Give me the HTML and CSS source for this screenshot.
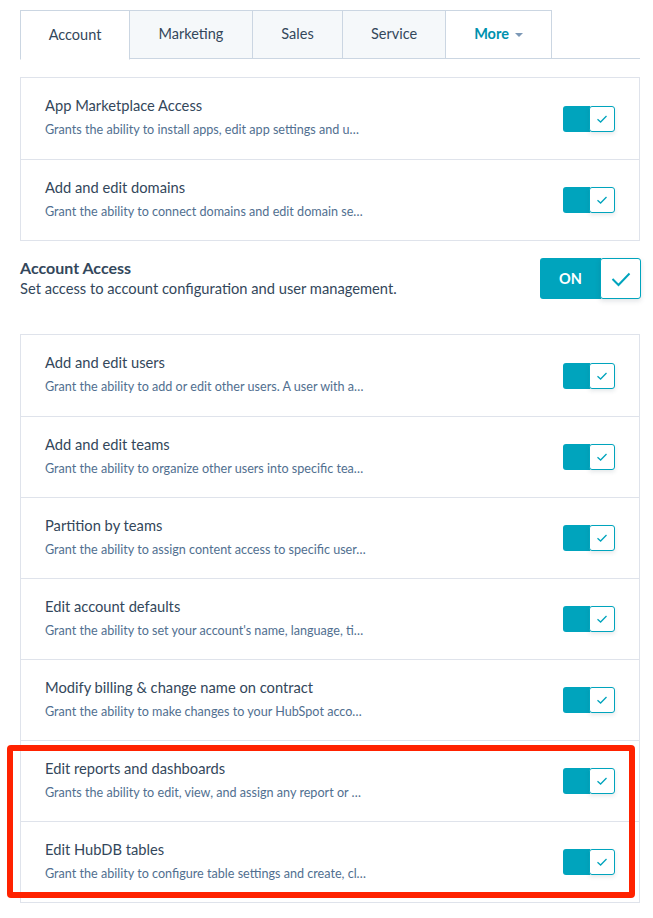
FILE: index.html
```html
<!DOCTYPE html>
<html>
<head>
<meta charset="utf-8">
<link rel="stylesheet" href="styles.css">
</head>
<body>
<div class="page">
  <div class="tabs">
    <div class="tab active">Account</div>
    <div class="tab">Marketing</div>
    <div class="tab">Sales</div>
    <div class="tab">Service</div>
    <div class="tab more">More <span class="caret"></span></div>
  </div>

  <div class="card">
    <div class="row">
      <div class="text"><div class="title">App Marketplace Access</div><div class="desc">Grants the ability to install apps, edit app settings and u…</div></div>
      <div class="toggle"><span class="on"></span><span class="knob"><svg viewBox="0 0 12 10" width="12" height="10"><path d="M1.5 5.2 L4.6 8 L10.5 2" fill="none" stroke="#00a4bd" stroke-width="1.3"/></svg></span></div>
    </div>
    <div class="row">
      <div class="text"><div class="title">Add and edit domains</div><div class="desc">Grant the ability to connect domains and edit domain se…</div></div>
      <div class="toggle"><span class="on"></span><span class="knob"><svg viewBox="0 0 12 10" width="12" height="10"><path d="M1.5 5.2 L4.6 8 L10.5 2" fill="none" stroke="#00a4bd" stroke-width="1.3"/></svg></span></div>
    </div>
  </div>

  <div class="section">
    <div class="section-text">
      <div class="section-title">Account Access</div>
      <div class="section-desc">Set access to account configuration and user management.</div>
    </div>
    <div class="big-toggle"><span class="big-on">ON</span><span class="big-knob"><svg viewBox="0 0 20 16" width="20" height="16"><path d="M1.5 8 L7.5 14 L18.5 2.5" fill="none" stroke="#00a4bd" stroke-width="2"/></svg></span></div>
  </div>

  <div class="card">
    <div class="row">
      <div class="text"><div class="title">Add and edit users</div><div class="desc">Grant the ability to add or edit other users. A user with a…</div></div>
      <div class="toggle"><span class="on"></span><span class="knob"><svg viewBox="0 0 12 10" width="12" height="10"><path d="M1.5 5.2 L4.6 8 L10.5 2" fill="none" stroke="#00a4bd" stroke-width="1.3"/></svg></span></div>
    </div>
    <div class="row">
      <div class="text"><div class="title">Add and edit teams</div><div class="desc">Grant the ability to organize other users into specific tea…</div></div>
      <div class="toggle"><span class="on"></span><span class="knob"><svg viewBox="0 0 12 10" width="12" height="10"><path d="M1.5 5.2 L4.6 8 L10.5 2" fill="none" stroke="#00a4bd" stroke-width="1.3"/></svg></span></div>
    </div>
    <div class="row">
      <div class="text"><div class="title">Partition by teams</div><div class="desc">Grant the ability to assign content access to specific user…</div></div>
      <div class="toggle"><span class="on"></span><span class="knob"><svg viewBox="0 0 12 10" width="12" height="10"><path d="M1.5 5.2 L4.6 8 L10.5 2" fill="none" stroke="#00a4bd" stroke-width="1.3"/></svg></span></div>
    </div>
    <div class="row">
      <div class="text"><div class="title">Edit account defaults</div><div class="desc">Grant the ability to set your account's name, language, ti…</div></div>
      <div class="toggle"><span class="on"></span><span class="knob"><svg viewBox="0 0 12 10" width="12" height="10"><path d="M1.5 5.2 L4.6 8 L10.5 2" fill="none" stroke="#00a4bd" stroke-width="1.3"/></svg></span></div>
    </div>
    <div class="row">
      <div class="text"><div class="title">Modify billing &amp; change name on contract</div><div class="desc">Grant the ability to make changes to your HubSpot acco…</div></div>
      <div class="toggle"><span class="on"></span><span class="knob"><svg viewBox="0 0 12 10" width="12" height="10"><path d="M1.5 5.2 L4.6 8 L10.5 2" fill="none" stroke="#00a4bd" stroke-width="1.3"/></svg></span></div>
    </div>
    <div class="row">
      <div class="text"><div class="title">Edit reports and dashboards</div><div class="desc">Grants the ability to edit, view, and assign any report or …</div></div>
      <div class="toggle"><span class="on"></span><span class="knob"><svg viewBox="0 0 12 10" width="12" height="10"><path d="M1.5 5.2 L4.6 8 L10.5 2" fill="none" stroke="#00a4bd" stroke-width="1.3"/></svg></span></div>
    </div>
    <div class="row">
      <div class="text"><div class="title">Edit HubDB tables</div><div class="desc">Grant the ability to configure table settings and create, cl…</div></div>
      <div class="toggle"><span class="on"></span><span class="knob"><svg viewBox="0 0 12 10" width="12" height="10"><path d="M1.5 5.2 L4.6 8 L10.5 2" fill="none" stroke="#00a4bd" stroke-width="1.3"/></svg></span></div>
    </div>
  </div>

  <div class="highlight"></div>
</div>
</body>
</html>
```
FILE: styles.css
```css
* { box-sizing: border-box; }
html, body { margin: 0; padding: 0; background: #fff; }
body { font-family: Lato, "Open Sans", sans-serif; color: #33475b; }
.page { position: relative; width: 653px; height: 918px; padding: 10px 13px 0 20px; }

.tabs { display: flex; height: 49px; border-bottom: 1px solid #cbd6e2; }
.tab { display: flex; align-items: center; justify-content: center; height: 49px; padding-bottom: 2px;
  border: 1px solid #cbd6e2; border-left: none; background: #f5f8fa;
  font-size: 14.5px; color: #33475b; }
.tab:nth-child(1) { width: 110px; border-left: 1px solid #cbd6e2; }
.tab:nth-child(2) { width: 123px; }
.tab:nth-child(3) { width: 90px; }
.tab:nth-child(4) { width: 103px; }
.tab:nth-child(5) { width: 106px; }
.tab.active { background: #fff; border-bottom: 1px solid #fff; margin-bottom: -1px; height: 50px; }
.tab.more { background: #fff; color: #0091ae; font-weight: 700; border-bottom: none; height: 48px; }
.caret { display: inline-block; width: 0; height: 0; margin-left: 6px; margin-top: 2px;
  border-left: 4px solid transparent; border-right: 4px solid transparent; border-top: 4px solid #7c98b6; }

.card { border: 1px solid #dfe3eb; margin-top: 18px; }
.row { display: flex; align-items: center; justify-content: space-between; height: 81px;
  padding: 0 24px 0 24px; border-top: 1px solid #dfe3eb; }
.row:first-child { border-top: none; height: 81px; }
.text { padding-bottom: 3px; }
.title { font-size: 14.7px; line-height: 20px; color: #33475b; }
.desc { font-size: 12.6px; line-height: 18px; color: #516f90; margin-top: 6px; }

.toggle { display: flex; width: 52px; height: 26px; }
.on { width: 27px; height: 26px; background: #00a4bd; border-radius: 3px 0 0 3px; }
.knob { width: 26px; height: 26px; margin-left: -1px; background: #fff; border: 1px solid #00a4bd; border-radius: 3px;
  display: flex; align-items: center; justify-content: center; box-shadow: 0 2px 4px rgba(45,62,80,0.12); }

.section { display: flex; justify-content: space-between; align-items: flex-start; margin-top: 17px; height: 58px; }
.section-text { padding-top: 0; }
.section-title { font-size: 16px; font-weight: 700; line-height: 20px; color: #33475b; }
.section-desc { font-size: 14.7px; line-height: 20px; color: #33475b; }
.big-toggle { display: flex; width: 101px; height: 41px; margin-right: -1px; }
.big-on { width: 61px; height: 41px; background: #00a4bd; border-radius: 3px 0 0 3px; color: #fff;
  font-weight: 700; font-size: 14.5px; display: flex; align-items: center; justify-content: center; }
.big-knob { width: 41px; height: 41px; margin-left: -1px; background: #fff; border: 1px solid #00a4bd; border-radius: 3px;
  display: flex; align-items: center; justify-content: center; box-shadow: 0 2px 5px rgba(45,62,80,0.15); }

.highlight { position: absolute; left: 7px; top: 745px; width: 628px; height: 153px;
  border: 6px solid #ff2200; border-radius: 4px; }
```
